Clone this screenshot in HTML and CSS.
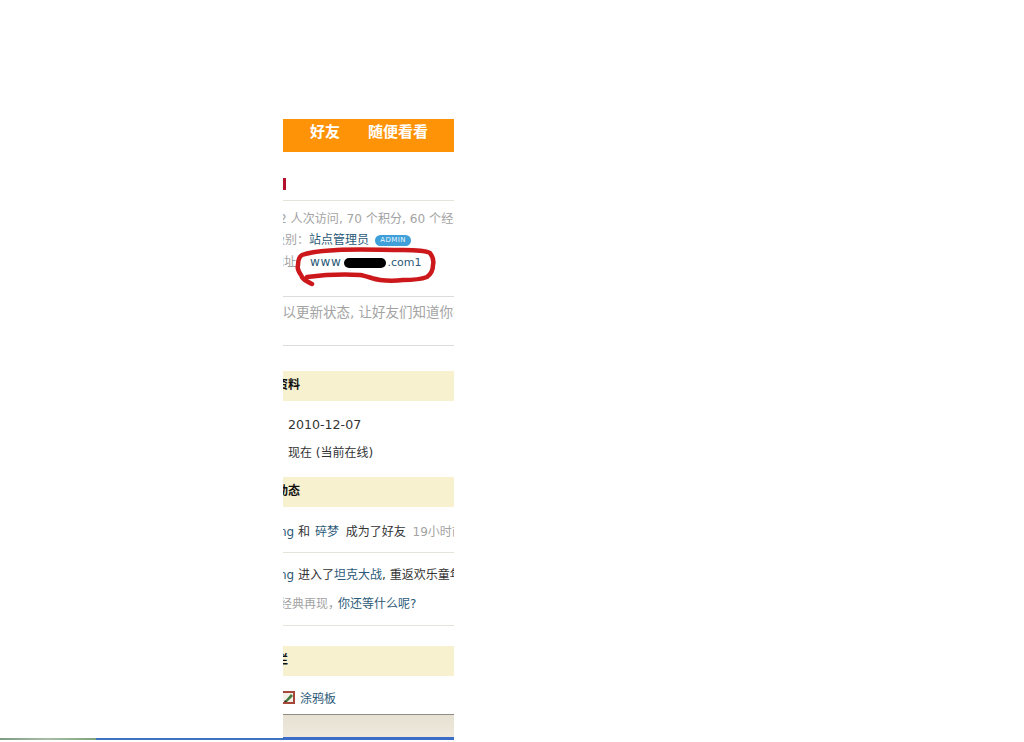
FILE: index.html
```html
<!DOCTYPE html>
<html lang="zh-CN">
<head>
<meta charset="utf-8">
<title>个人主页</title>
<link rel="stylesheet" href="styles.css">
</head>
<body>
<div class="page">
  <main class="panel">
    <nav class="nav"><a>好友</a><a>随便看看</a></nav>
    <div class="title-row"><span class="title-mark"></span></div>
    <div class="info">
      <div class="row row-visits gray">2 人次访问, 70 个积分, 60 个经验</div>
      <div class="row row-group gray">级别：<a class="link">站点管理员</a><span class="badge">ADMIN</span></div>
      <div class="row row-url gray">地址：<a class="link url">www<span class="blot"></span><span class="url-end">.com1</span></a>
        <svg class="circle" viewBox="0 0 171 50" aria-hidden="true"><path d="M29 46C23 43 19 41 18 37C15 33 14 30 15 27C15 22 16 19 19 17C30 13 42 13 54 12C76 11 98 12 120 12C130 12 141 12 147 15C150 19 151 23 150 27C150 32 148 36 144 39C136 42 128 42 120 42C112 43 105 43 97 42C90 41 84 38 77 37C60 36 40 37 24 39" /></svg>
      </div>
    </div>
    <div class="status gray">可以更新状态, 让好友们知道你在做什么</div>
    <h2 class="heading heading-first">基本资料</h2>
    <div class="facts">
      <div class="fact">2010-12-07</div>
      <div class="fact fact-online">现在 (当前在线)</div>
    </div>
    <h2 class="heading">最新动态</h2>
    <div class="feed feed-one"><a class="link">ng</a> 和 <a class="link name">碎梦</a> 成为了好友 <span class="gray time">19小时前</span></div>
    <div class="feed-two">
      <div class="feed"><a class="link">ng</a> 进入了<a class="link">坦克大战</a>, 重返欢乐童年</div>
      <div class="feed feed-sub"><span class="gray">经典再现，</span><a class="link tight">你还等什么呢?</a></div>
    </div>
    <h2 class="heading heading-last">应用栏</h2>
    <div class="app">
      <svg class="app-icon" viewBox="1 0 12 13" aria-hidden="true">
        <rect x="0" y="1" width="12" height="11" fill="#f4efe6" stroke="#a5483a" stroke-width="2"/>
        <path d="M3 10 9 3 11 5 5 11Z" fill="#3f7a3c"/>
        <path d="M2 11 3 9 5 11Z" fill="#222"/>
      </svg>
      <a class="link">涂鸦板</a>
    </div>
    <div class="toolbar"></div>
    <div class="toolbar-edge"></div>
  </main>
</div>
<div class="strip">
  <div class="strip-green"></div>
  <div class="strip-blue"></div>
  <div class="strip-panel"></div>
</div>
</body>
</html>
```
FILE: styles.css
```css
* { box-sizing: border-box; }
html, body { margin: 0; padding: 0; background: #fff; }
body { font-family: "DejaVu Sans", "Noto Sans CJK SC", sans-serif; font-size: 12px; color: #333; }
.page { height: 738px; padding: 119px 0 0 283px; }
.panel { width: 171px; height: 619px; overflow: hidden; display: flex; flex-direction: column; white-space: nowrap; }
.gray { color: #a3a3a3; }
.link { color: #2c5a78; }
.nav { height: 33px; flex: none; background: #ff9308; display: flex; gap: 28px; padding: 0 0 10px 27px; align-items: center; color: #fff; font-weight: 700; font-size: 15px; line-height: 20px; font-family: "Noto Sans CJK SC", sans-serif; }
.title-row { height: 49px; flex: none; border-bottom: 1px solid #e6e3d8; }
.title-mark { display: block; width: 3px; height: 12px; margin-top: 26px; background: #b3122f; }
.info { flex: none; height: 96px; padding-top: 8px; border-bottom: 1px solid #dcdcdc; }
.row { height: 21.5px; line-height: 21.5px; display: flex; align-items: center; position: relative; }
.row-visits { height: 20.5px; margin-left: -4px; font-size: 12.1px; }
.row-group { margin-left: -10px; }
.row-url { height: 24px; margin-left: -11px; }
.badge { margin-left: 6px; width: 36px; height: 11px; border-radius: 6px; background: #3f9fd8; color: #e8f6ff; font-size: 7px; letter-spacing: 0.4px; line-height: 11px; text-align: center; }
.url { letter-spacing: 0.7px; display: flex; align-items: center; margin-left: 2px; }
.blot { display: inline-block; width: 42px; height: 10px; border-radius: 5px; background: #000; margin: 0 2px; }
.url-end { font-size: 11px; letter-spacing: 0; }
.circle { position: absolute; left: 11px; top: -13px; width: 171px; height: 50px; pointer-events: none; }
.circle path { fill: none; stroke: #cc181b; stroke-width: 4.5; stroke-linecap: round; stroke-linejoin: round; }
.status { flex: none; height: 49px; padding-top: 4px; line-height: 22px; font-size: 13.5px; text-indent: -14px; border-bottom: 1px solid #dcdcdc; }
.heading { flex: none; height: 30px; margin: 0; background: #f8f1d0; color: #111; font-size: 12px; font-weight: 700; line-height: 26px; text-indent: -31px; font-family: "Noto Sans CJK SC", sans-serif; }
.heading-first { margin-top: 25px; }
.heading-last { margin-top: 20px; }
.facts { flex: none; height: 76px; padding: 10px 0 0 5px; }
.fact { height: 28px; line-height: 28px; font-size: 12.6px; }
.fact-online { font-size: 12px; }
.feed { line-height: 22px; margin-left: -4px; }
.feed-one { flex: none; height: 46px; padding-top: 14px; border-bottom: 1px solid #e6e3d8; margin-left: 0; text-indent: -4px; }
.feed-two { flex: none; height: 73px; padding-top: 11px; border-bottom: 1px solid #e6e3d8; }
.feed-sub { margin: 7px 0 0 -3px; }
.tight { margin-left: -2px; }
.name { margin: 0 3px 0 1px; }
.time { margin-left: 3px; }
.app { flex: none; height: 38px; display: flex; align-items: center; gap: 5px; padding-top: 4px; }
.app-icon { width: 12px; height: 13px; flex: none; }
.toolbar { flex: none; height: 23px; background: linear-gradient(180deg, #e6e1d2, #eee9dc); border-top: 1px solid #8f8d82; }
.toolbar-edge { flex: none; height: 1px; background: #3a6cc8; }
.strip { display: flex; height: 2px; }
.strip-green { width: 96px; background: linear-gradient(90deg, #7f9a82, #a7bfa5 50%, #7fa27c); }
.strip-blue { width: 187px; background: #3d73c0; }
.strip-panel { width: 171px; background: #3a6cc8; }
```
